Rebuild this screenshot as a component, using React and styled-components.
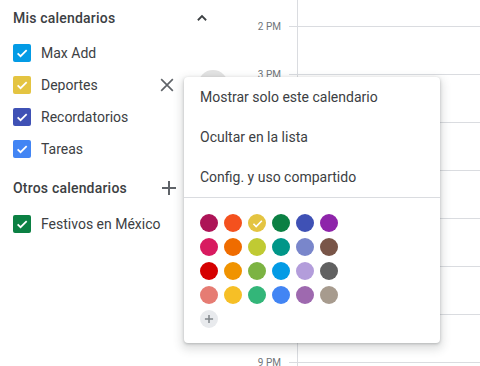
import React from "react";
import styled, { createGlobalStyle } from "styled-components";

const GlobalStyle = createGlobalStyle`
  html, body {
    margin: 0;
    padding: 0;
    background: #fff;
    overflow: hidden;
  }
  body {
    font-family: Roboto, "Noto Sans", Arial, sans-serif;
    color: #3c4043;
  }
`;

const Page = styled.div`
  position: relative;
  display: flex;
  width: 480px;
  height: 366px;
  overflow: hidden;
`;

const Sidebar = styled.div`
  width: 240px;
  flex-shrink: 0;
  padding-left: 13px;
  box-sizing: border-box;
`;

const SectionHeader = styled.div`
  display: flex;
  align-items: center;
  height: ${(p) => p.h}px;
  margin-top: ${(p) => p.mt || 0}px;
  margin-bottom: 2px;
  padding-right: ${(p) => p.pr}px;
`;

const SectionTitle = styled.div`
  flex: 1;
  font-size: 14px;
  font-weight: 500;
  letter-spacing: 0.2px;
  color: #3c4043;
`;

const Row = styled.div`
  position: relative;
  display: flex;
  align-items: center;
  height: 32px;
`;

const Box = styled.div`
  width: 18px;
  height: 18px;
  border-radius: 2px;
  background: ${(p) => p.color};
  display: flex;
  align-items: center;
  justify-content: center;
  margin-right: 10px;
`;

const Label = styled.div`
  flex: 1;
  font-size: 14px;
  color: #3c4043;
`;

const RowIcon = styled.div`
  width: 20px;
  height: 20px;
  display: flex;
  align-items: center;
  justify-content: center;
  margin-right: 63px;
`;

const HoverDot = styled.div`
  position: absolute;
  left: 185px;
  top: 1px;
  width: 30px;
  height: 30px;
  border-radius: 50%;
  background: #e3e3e3;
`;

const Grid = styled.div`
  flex: 1;
  display: flex;
`;

const Gutter = styled.div`
  width: 57px;
  flex-shrink: 0;
  padding-top: 2px;
`;

const HourSlot = styled.div`
  height: 48px;
  display: flex;
  align-items: center;
  justify-content: flex-end;
  position: relative;
`;

const HourLabel = styled.span`
  font-size: 10px;
  color: #70757a;
  margin-right: 16px;
`;

const Tick = styled.div`
  position: absolute;
  right: 0;
  top: 50%;
  width: 8px;
  border-top: 1px solid #dadce0;
`;

const Column = styled.div`
  flex: 1;
  border-left: 1px solid #dadce0;
  padding-top: 26px;
`;

const HourLine = styled.div`
  height: 47px;
  border-top: 1px solid #dadce0;
`;

const Menu = styled.div`
  position: absolute;
  left: 184px;
  top: 77px;
  width: 256px;
  height: 266px;
  background: #fff;
  border-radius: 4px;
  box-shadow: 0 4px 8px 3px rgba(60, 64, 67, 0.15),
    0 1px 3px rgba(60, 64, 67, 0.3);
  box-sizing: border-box;
`;

const MenuItem = styled.div`
  height: 40px;
  display: flex;
  align-items: center;
  padding-left: 16px;
  font-size: 14px;
  color: #3c4043;
`;

const Divider = styled.div`
  border-top: 1px solid #dadce0;
`;

const Swatches = styled.div`
  display: grid;
  grid-template-columns: repeat(6, 18px);
  grid-auto-rows: 18px;
  gap: 6px;
  padding: 16px 0 0 16px;
`;

const Swatch = styled.div`
  width: 18px;
  height: 18px;
  border-radius: 50%;
  background: ${(p) => p.color};
  display: flex;
  align-items: center;
  justify-content: center;
`;

const Check = ({ size = 14 }) => (
  <svg width={size} height={size} viewBox="0 0 24 24">
    <path
      d="M4.5 12.5l5 5L20 7"
      fill="none"
      stroke="#fff"
      strokeWidth="3"
    />
  </svg>
);

const ChevronUp = () => (
  <svg width="18" height="18" viewBox="0 0 24 24">
    <path d="M6.5 15l5.5-5.5 5.5 5.5" fill="none" stroke="#3c4043" strokeWidth="2.4" />
  </svg>
);

const CloseIcon = () => (
  <svg width="20" height="20" viewBox="0 0 24 24">
    <path d="M5 5l14 14M19 5L5 19" fill="none" stroke="#5f6368" strokeWidth="2" />
  </svg>
);

const PlusIcon = ({ size = 24, color = "#5f6368", w = 2 }) => (
  <svg width={size} height={size} viewBox="0 0 24 24">
    <path d="M12 5v14M5 12h14" fill="none" stroke={color} strokeWidth={w} />
  </svg>
);

const mine = [
  { name: "Max Add", color: "#039be5" },
  { name: "Deportes", color: "#e4c441", active: true },
  { name: "Recordatorios", color: "#3f51b5" },
  { name: "Tareas", color: "#4285f4" },
];

const palette = [
  "#ad1457", "#f4511e", "#e4c441", "#0b8043", "#3f51b5", "#8e24aa",
  "#d81b60", "#ef6c00", "#c0ca33", "#009688", "#7986cb", "#795548",
  "#d50000", "#f09300", "#7cb342", "#039be5", "#b39ddb", "#616161",
  "#e67c73", "#f6bf26", "#33b679", "#4285f4", "#9e69af", "#a79b8e",
];

const hours = ["2 PM", "3 PM", "", "", "", "", "", "9 PM"];

export default function App() {
  return (
    <>
      <GlobalStyle />
      <Page>
        <Sidebar>
          <SectionHeader h={35} pr={29}>
            <SectionTitle>Mis calendarios</SectionTitle>
            <ChevronUp />
          </SectionHeader>
          {mine.map((c) => (
            <Row key={c.name}>
              {c.active && <HoverDot />}
              <Box color={c.color}>
                <Check />
              </Box>
              <Label>{c.name}</Label>
              {c.active && (
                <RowIcon>
                  <CloseIcon />
                </RowIcon>
              )}
            </Row>
          ))}
          <SectionHeader h={36} mt={5} pr={59}>
            <SectionTitle>Otros calendarios</SectionTitle>
            <PlusIcon />
          </SectionHeader>
          <Row>
            <Box color="#0b8043">
              <Check />
            </Box>
            <Label>Festivos en México</Label>
          </Row>
        </Sidebar>
        <Grid>
          <Gutter>
            {hours.map((h, i) => (
              <HourSlot key={i}>
                <HourLabel>{h}</HourLabel>
                <Tick />
              </HourSlot>
            ))}
          </Gutter>
          <Column>
            {hours.map((h, i) => (
              <HourLine key={i} />
            ))}
          </Column>
        </Grid>
        <Menu>
          <MenuItem>Mostrar solo este calendario</MenuItem>
          <MenuItem>Ocultar en la lista</MenuItem>
          <MenuItem>Config. y uso compartido</MenuItem>
          <Divider />
          <Swatches>
            {palette.map((c) => (
              <Swatch key={c} color={c}>
                {c === "#e4c441" && <Check size={13} />}
              </Swatch>
            ))}
            <Swatch color="#e8eaed">
              <PlusIcon size={14} color="#80868b" w={2.6} />
            </Swatch>
          </Swatches>
        </Menu>
      </Page>
    </>
  );
}
